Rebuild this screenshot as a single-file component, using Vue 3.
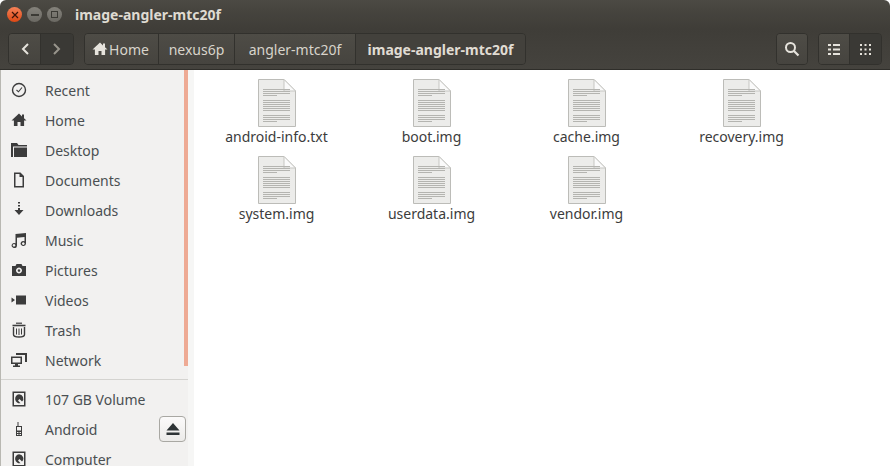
<script setup>
const places = [
  { name: 'Recent', icon: 'recent' },
  { name: 'Home', icon: 'home' },
  { name: 'Desktop', icon: 'desktop' },
  { name: 'Documents', icon: 'documents' },
  { name: 'Downloads', icon: 'downloads' },
  { name: 'Music', icon: 'music' },
  { name: 'Pictures', icon: 'pictures' },
  { name: 'Videos', icon: 'videos' },
  { name: 'Trash', icon: 'trash' },
  { name: 'Network', icon: 'network' }
]
const devices = [
  { name: '107 GB Volume', icon: 'disk' },
  { name: 'Android', icon: 'phone', eject: true },
  { name: 'Computer', icon: 'disk' }
]
const crumbs = ['nexus6p', 'angler-mtc20f']
const files = ['android-info.txt', 'boot.img', 'cache.img', 'recovery.img', 'system.img', 'userdata.img', 'vendor.img']
const lines = [10, 12, 14, 16, 21, 23, 25, 27, 29, 31, 36, 38, 40, 42]
</script>

<template>
  <div class="window">
    <header class="titlebar">
      <span class="wm close"><svg viewBox="0 0 8 8" width="8" height="8"><path d="M1 1l6 6M7 1L1 7" stroke="#3b1408" stroke-width="1.2" /></svg></span>
      <span class="wm"><i class="wm-min"></i></span>
      <span class="wm"><i class="wm-max"></i></span>
      <span class="title">image-angler-mtc20f</span>
    </header>

    <div class="toolbar">
      <div class="group nav">
        <button class="seg nav-btn">
          <svg viewBox="0 0 10 14" width="10" height="14"><path d="M8 2L3 7l5 5" fill="none" stroke="#e6e3dc" stroke-width="2" /></svg>
        </button>
        <button class="seg nav-btn sunk">
          <svg viewBox="0 0 10 14" width="10" height="14"><path d="M2 2l5 5-5 5" fill="none" stroke="#98958c" stroke-width="2" /></svg>
        </button>
      </div>

      <div class="group path">
        <button class="seg crumb home">
          <svg viewBox="0 0 16 16" width="16" height="16"><path d="M8 1.5L0.5 8.5h2.4V14h3.6v-4h3v4h3.6V8.5h2.4L13 6.3V2.5h-2v1.9z" fill="#e6e3dc" /></svg>
          Home
        </button>
        <button v-for="c in crumbs" :key="c" class="seg crumb">{{ c }}</button>
        <button class="seg crumb current">image-angler-mtc20f</button>
      </div>

      <div class="spacer"></div>

      <div class="group single">
        <button class="seg tool">
          <svg viewBox="0 0 16 16" width="16" height="16"><circle cx="6.5" cy="6.5" r="4.5" fill="none" stroke="#e6e3dc" stroke-width="2" /><path d="M10 10l4.5 4.5" stroke="#e6e3dc" stroke-width="2.2" /></svg>
        </button>
      </div>
      <div class="group views">
        <button class="seg tool">
          <svg viewBox="0 0 12 11" width="12" height="11" fill="#e6e3dc"><path d="M0 0h3v2H0zM5 0h7v2H5zM0 4.500h3v2H0zM5 4.500h7v2H5zM0 9h3v2H0zM5 9h7v2H5z" /></svg>
        </button>
        <button class="seg tool sunk">
          <svg viewBox="0 0 11 11" width="11" height="11" fill="#e6e3dc"><path d="M0 0h2v2H0zM4.500 0h2v2h-2zM9 0h2v2H9zM0 4.500h2v2H0zM4.500 4.500h2v2h-2zM9 4.500h2v2H9zM0 9h2v2H0zM4.500 9h2v2h-2zM9 9h2v2H9z" /></svg>
        </button>
      </div>
    </div>

    <div class="body">
      <aside class="sidebar">
        <div class="thumb"></div>
        <ul class="list">
          <li v-for="p in places" :key="p.name" class="row">
            <svg class="ico" viewBox="0 0 16 16" width="16" height="16">
              <template v-if="p.icon === 'recent'"><circle cx="8" cy="8" r="6.500" fill="none" stroke="#3c3c3c" stroke-width="1.400" /><path d="M5.500 8l2 1.800L11 5.500" fill="none" stroke="#3c3c3c" stroke-width="1.100" /></template>
              <path v-else-if="p.icon === 'home'" d="M8 1.500L0.500 8.500h2.400V14h3.600v-4h3v4h3.600V8.500h2.400L13 6.300V2.500h-2v1.900z" fill="#3c3c3c" />
              <path v-else-if="p.icon === 'desktop'" d="M0 1h6l1.500 2H16v1.500H2V15H0zM3 5.500h13V15H3z" fill="#3c3c3c" />
              <path v-else-if="p.icon === 'documents'" fill-rule="evenodd" d="M3 0.500h6.500L13 4v11.500H3zM4.500 2v12h7V5H8.500V2z" fill="#3c3c3c" />
              <path v-else-if="p.icon === 'downloads'" d="M7 0h2v1.500H7zM7 3h2v1.500H7zM7 6h2v2h3.500L8 13 3.500 8H7z" fill="#3c3c3c" />
              <path v-else-if="p.icon === 'music'" fill-rule="evenodd" d="M4.500 2L15 1v10.500a2.700 2.500 0 1 1-1.500-2.200V5L6 5.700v7.800a2.700 2.500 0 1 1-1.500-2.200zM3 12a1.300 1.300 0 1 0 .01 0zM12.300 10.300a1.300 1.300 0 1 0 .01 0z" fill="#3c3c3c" />
              <path v-else-if="p.icon === 'pictures'" fill-rule="evenodd" d="M1 4h3.500l1-2h5l1 2H15v10H1zM8 5.500a3 3 0 1 0 .01 0zM8 7.200a1.300 1.300 0 1 1-.01 0z" fill="#3c3c3c" />
              <path v-else-if="p.icon === 'videos'" d="M5 3.500h10v9H5zM0.500 5.500L4 8l-3.500 2.500z" fill="#3c3c3c" />
              <g v-else-if="p.icon === 'trash'" fill="none" stroke="#3c3c3c"><path d="M1.500 3.500h13" stroke-width="1.600" /><path d="M5 1.200h6" stroke-width="1.200" /><path d="M2.500 5v7.500c0 1.500 2 2.500 5.500 2.500s5.500-1 5.500-2.500V5" stroke-width="1.400" /><path d="M5.500 6.500v6M8 6.500v6.500M10.500 6.500v6" stroke-width="1" /></g>
              <path v-else-if="p.icon === 'network'" fill-rule="evenodd" d="M5 1h11v9h-2V3H5zM0 4.500h11V12H7v1.500h2V15H2v-1.500h2V12H0zM1.500 6v4.500h8V6z" fill="#3c3c3c" />
            </svg>
            <span>{{ p.name }}</span>
          </li>
        </ul>
        <div class="sep"></div>
        <ul class="list">
          <li v-for="d in devices" :key="d.name" class="row">
            <svg class="ico" viewBox="0 0 16 16" width="16" height="16">
              <path v-if="d.icon === 'disk'" fill-rule="evenodd" d="M1.500 0.500h13v15h-13zM3 2v12h10V2zM8 3.200a4.300 4.300 0 0 1 3 7.400L8.500 8 7 9.500l2.500 2.800A4.300 4.300 0 1 1 8 3.200z" fill="#3c3c3c" />
              <path v-else fill-rule="evenodd" d="M6.500 1h1v4H11v10H5V5h1.500zM6 6v3.500h4V6zM6 11h1v1H6zM7.500 11h1v1h-1zM9 11h1v1H9zM6 13h1v1H6zM7.500 13h1v1h-1zM9 13h1v1H9z" fill="#3c3c3c" />
            </svg>
            <span>{{ d.name }}</span>
            <button v-if="d.eject" class="eject">
              <svg viewBox="0 0 14 12" width="14" height="12"><path d="M7 0l6.500 7.500H.5zM.5 9.500h13V12H.5z" fill="#2e3436" /></svg>
            </button>
          </li>
        </ul>
      </aside>

      <main class="files">
        <div v-for="f in files" :key="f" class="file">
          <svg viewBox="0 0 38 48" width="38" height="48">
            <path d="M0.500 0.500H26L37.500 12V47.500H0.500z" fill="#ececea" stroke="#bcbcb8" />
            <path d="M26 0.500V12h11.500z" fill="#fafafa" stroke="#c6c6c2" />
            <rect v-for="y in lines" :key="y" x="5" :y="y" :width="y === 16 || y === 42 ? 14 : 27" height="1" fill="#b4b4b0" />
          </svg>
          <span class="file-name">{{ f }}</span>
        </div>
      </main>
    </div>
  </div>
</template>

<style scoped>
.window {
  width: 890px;
  height: 466px;
  display: flex;
  flex-direction: column;
  overflow: hidden;
  font-family: "Noto Sans", "Open Sans", sans-serif;
  font-size: 14px;
  background: #fff;
}
.titlebar {
  height: 29px;
  display: flex;
  align-items: center;
  gap: 5px;
  padding: 0 7px;
  background: linear-gradient(#4c4a44, #47453f 30%, #3f3d38);
  border-radius: 6px 6px 0 0;
  box-sizing: border-box;
}
.wm {
  width: 15px;
  height: 15px;
  border-radius: 50%;
  background: linear-gradient(#84827b, #6b6963);
  display: flex;
  align-items: center;
  justify-content: center;
}
.close { background: linear-gradient(#f58258, #dd4814); }
.wm-min {
  width: 8px;
  height: 2px;
  background: #3b3a35;
}
.wm-max {
  width: 5px;
  height: 5px;
  border: 1.500px solid #3b3a35;
}
.title {
  margin-left: 8px;
  font-weight: 700;
  font-size: 14px;
  color: #dfdbd2;
}
.toolbar {
  height: 41px;
  display: flex;
  align-items: flex-start;
  gap: 10px;
  padding: 4px 8px 0;
  box-sizing: border-box;
  background: linear-gradient(#3f3d38, #45433e);
  border-bottom: 1px solid #2f2e2a;
}
.group {
  display: flex;
  height: 32px;
  border: 1px solid #32312d;
  border-radius: 4px;
  box-sizing: border-box;
  overflow: hidden;
}
.seg {
  height: 100%;
  padding: 0;
  border: 0;
  border-right: 1px solid #32312d;
  background: linear-gradient(#4e4c46, #46443f);
  color: #d8d4cb;
  font: inherit;
  display: flex;
  align-items: center;
  justify-content: center;
}
.seg:last-child { border-right: 0; }
.sunk { background: #3a3935; }
.nav-btn { width: 32px; }
.path { margin-left: 0; }
.crumb {
  padding: 0 12px;
  white-space: nowrap;
}
.home {
  gap: 1px;
  padding: 0 8px 0 6px;
  width: 74px;
}
.crumb:nth-child(2) { width: 76px; padding: 0; }
.crumb:nth-child(3) { width: 121px; padding: 0; }
.current {
  width: 169px;
  padding: 0;
  font-weight: 700;
  background: #43413c;
  color: #e0dcd3;
}
.spacer { flex: 1; }
.tool { width: 32px; }
.single { width: 32px; }
.views { width: 64px; }
.body {
  flex: 1;
  display: flex;
  min-height: 0;
}
.sidebar {
  position: relative;
  width: 188px;
  flex-shrink: 0;
  box-sizing: border-box;
  padding-top: 5px;
  background: #f2f1f0;
  border-left: 1px solid #b9b8b2;
  color: #4a4f52;
  overflow: hidden;
}
.thumb {
  position: absolute;
  top: 0;
  right: 0;
  width: 4px;
  height: 296px;
  background: #eeaa94;
}
.list {
  list-style: none;
  margin: 0;
  padding: 0;
}
.row {
  position: relative;
  height: 30px;
  display: flex;
  align-items: center;
  gap: 18px;
  padding-left: 10px;
}
.ico { flex-shrink: 0; }
.sep {
  height: 1px;
  margin: 4px 0 4px;
  background: #d4d3d0;
}
.eject {
  position: absolute;
  right: 2px;
  top: 2px;
  width: 27px;
  height: 26px;
  padding: 0;
  border: 1px solid #a9a8a3;
  border-radius: 4px;
  background: linear-gradient(#fbfafa, #ecebe9);
  display: flex;
  align-items: center;
  justify-content: center;
}
.files {
  flex: 1;
  display: grid;
  grid-template-columns: repeat(4, 155px);
  grid-auto-rows: 77px;
  align-content: start;
  padding: 9px 0 0 11px;
  background: linear-gradient(90deg, #f6f6f5 0, #f6f6f5 6px, #fff 6px);
}
.file {
  display: flex;
  flex-direction: column;
  align-items: center;
  color: #3c3c3c;
}
.file-name {
  margin-top: 1px;
  line-height: 18px;
}
</style>
<style>
html, body { background: #fff; }
</style>
